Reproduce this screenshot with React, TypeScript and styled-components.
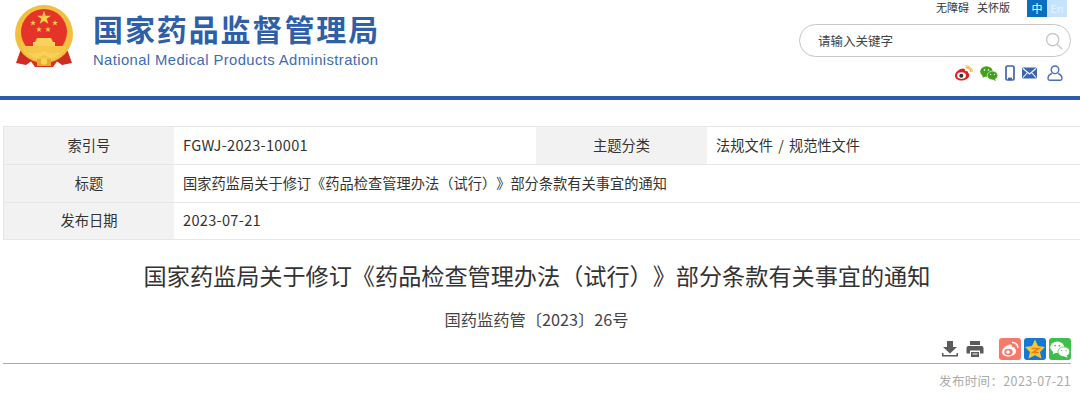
import React from "react";
import styled, { createGlobalStyle } from "styled-components";

const Global = createGlobalStyle`
  html, body { margin: 0; padding: 0; background: #fff; }
  body { font-family: "Liberation Sans", "Noto Sans CJK SC", sans-serif; color: #333; width: 1080px; height: 413px; overflow: hidden; text-spacing-trim: space-all; }
`;
const Page = styled.div`
  width: 1080px; height: 413px; overflow: hidden; display: flex; flex-direction: column;
`;
const Header = styled.header`
  height: 96px; display: flex; justify-content: space-between; flex-shrink: 0;
`;
const Brand = styled.div`
  display: flex; padding: 5px 0 0 14px; gap: 19px; align-items: flex-start;
`;
const BrandText = styled.div`
  display: flex; flex-direction: column; padding-top: 6px; width: 290px;
`;
const BrandCn = styled.div`
  font: 700 30px/34px "Noto Sans CJK SC", sans-serif; color: #2e5fa8; letter-spacing: 1.9px; white-space: nowrap;
`;
const BrandEn = styled.div`
  font: 400 14.8px/16px "Liberation Sans", sans-serif; color: #3f6bb0; letter-spacing: 0.41px; margin-top: 7px; white-space: nowrap;
`;
const Tools = styled.div`
  width: 281px; display: flex; flex-direction: column; align-items: flex-end;
`;
const TopLinks = styled.div`
  display: flex; align-items: flex-start; height: 17px; margin-right: 13px;
`;
const TopLink = styled.span`
  font: 400 11px/14px "Noto Sans CJK SC", sans-serif; color: #333; margin-right: 8px; white-space: nowrap;
`;
const Langs = styled.div`
  display: flex; margin-left: 9px;
`;
const Lang = styled.span<{ $on?: boolean }>`
  flex: 0 0 20px; height: 17px; display: flex; align-items: center; justify-content: center;
  font: 400 11px/1 "Noto Sans CJK SC", sans-serif;
  color: ${p => (p.$on ? "#fff" : "#e8f3ff")}; background: ${p => (p.$on ? "#0b6fc0" : "#c5e3fb")};
`;
const Search = styled.div`
  box-sizing: border-box; width: 272px; height: 33px; margin: 7px 9px 0 0; border: 1px solid #c6c6c6; border-radius: 17px;
  display: flex; align-items: center; justify-content: space-between; padding: 0 7px 0 18px;
`;
const SearchText = styled.span`
  font: 400 12.5px/1 "Noto Sans CJK SC", sans-serif; color: #444; position: relative; top: 1px;
`;
const Socials = styled.div`
  display: flex; align-items: center; gap: 7px; margin: 6px 17px 0 0; height: 20px;
`;
const UserSlot = styled.span`
  display: flex; margin-left: 3px;
`;
const Rule = styled.div`
  height: 4px; background: #2e5ca8; flex-shrink: 0;
`;
const Table = styled.div`
  margin: 26px 0 0 3px; width: 1077px; box-sizing: border-box; border: 1px solid #e6e6e6; border-right: 0;
  display: grid; grid-template-columns: 170px 362px 171px 1fr; grid-template-rows: 37px 37px 36px; row-gap: 1px; background: #e6e6e6;
  flex-shrink: 0;
`;
const Label = styled.div`
  background: #f2f2f2; display: flex; align-items: center; justify-content: center; padding-bottom: 1px; box-sizing: border-box;
  font: 400 14.25px/1 "Noto Sans CJK SC", sans-serif; color: #333;
`;
const Value = styled.div<{ $span?: number }>`
  background: #fff; display: flex; align-items: center; padding: 0 0 1px 9px; box-sizing: border-box;
  font: 400 14.24px/1 "Noto Sans CJK SC", sans-serif; color: #333; white-space: pre;
  grid-column: span ${p => p.$span ?? 1};
`;
const Latin = styled.span`
  font-size: 14.6px; letter-spacing: 0.3px;
`;
const Slash = styled.span`
  margin: 0 2px;
`;
const Title = styled.h1`
  margin: 19px 0 0; padding-right: 6px; font: 400 23.15px/32px "Noto Sans CJK SC", sans-serif; color: #333; text-align: center; white-space: nowrap;
`;
const DocNo = styled.div`
  margin-top: 18px; padding-right: 7px; font: 400 16.25px/20px "Noto Sans CJK SC", sans-serif; color: #444; text-align: center;
`;
const ShareBar = styled.div`
  margin: 8px 9px 0 3px; height: 27px; padding-top: 1px; box-sizing: border-box; border-bottom: 1px solid #aaa; display: flex; justify-content: flex-end; align-items: flex-start; gap: 3px;
`;
const Share = styled.span<{ $bg?: string }>`
  width: 22px; height: 22px; border-radius: 3px; background: ${p => p.$bg ?? "transparent"}; display: flex; align-items: center; justify-content: center;
`;
const Gap = styled.span`
  width: 7px;
`;
const Published = styled.div`
  margin: 9px 9px 0 0; text-align: right; font: 400 12.5px/16px "Noto Sans CJK SC", sans-serif; color: #aaa; letter-spacing: 0.35px;
`;

const star = "M0 -5 L1.18 -1.55 L4.76 -1.55 L1.9 .6 L2.94 4.05 L0 2 L-2.94 4.05 L-1.9 .6 L-4.76 -1.55 L-1.18 -1.55 Z";
const Emblem = () => (
  <svg width="60" height="62" viewBox="0 0 60 62">
    <path d="M7 44 L2 58 L12 60 L19 55 L41 55 L48 60 L58 58 L53 44 Z" fill="#cf2b1f" />
    <path d="M13 51 L21 62 H39 L47 51 Z" fill="#d9301f" />
    <circle cx="30" cy="29" r="29" fill="#f2bf3e" />
    <circle cx="30" cy="27" r="23" fill="#e5332a" />
    <path d="M11 40 A23 23 0 0 0 49 40 L47 43 H13 Z" fill="#e5332a" />
    <path d="M6 34 C10 46 18 52 30 52 C42 52 50 46 54 34 C52 50 42 56 30 56 C18 56 8 50 6 34 Z" fill="#f5c84c" />
    <path transform="translate(30 13) scale(1.45)" d={star} fill="#f6d04c" />
    <path transform="translate(19 18) scale(.62)" d={star} fill="#f6d04c" />
    <path transform="translate(41 18) scale(.62)" d={star} fill="#f6d04c" />
    <path transform="translate(25 24.5) scale(.6)" d={star} fill="#f6d04c" />
    <path transform="translate(34 24.5) scale(.6)" d={star} fill="#f6d04c" />
    <path d="M21 37 L23 33 H37 L39 37 H41 V42 H19 V37 Z" fill="#f8d35a" />
    <path d="M10 41 H50 C46 48 38 50 30 50 C22 50 14 48 10 41 Z" fill="#f5c84c" />
    <path d="M14 46 C18 50 24 49 30 46 C36 49 42 50 46 46 C44 52 38 54 34 52 L30 50 L26 52 C22 54 16 52 14 46 Z" fill="#f8d35a" />
    <path d="M23 54 H37 V61 H23 Z" fill="#e8a92f" />
    <circle cx="30" cy="56.5" r="3.2" fill="#f8d35a" />
  </svg>
);
const Magnifier = () => (
  <svg width="18" height="18" viewBox="0 0 20 20" fill="none" stroke="#c9c9c9" strokeWidth="1.6">
    <circle cx="8.5" cy="8.5" r="6.8" />
    <path d="M13.5 13.5 L18.5 18.5" strokeLinecap="round" />
  </svg>
);
const WeiboColor = () => (
  <svg width="19" height="16" viewBox="0 0 19 16">
    <path d="M1 10.5 C1 7 6 3.5 9 3.5 C11 3.5 11.5 5 11 6.2 C13 5.6 14.3 6.4 14 8 C15 8.3 15.3 9.2 15.3 10 C15.3 13 11.5 15.5 7.5 15.5 C4 15.5 1 13.7 1 10.5 Z" fill="#e0201f" />
    <ellipse cx="7.5" cy="10.6" rx="4.4" ry="3.3" fill="#fff" />
    <circle cx="7.3" cy="10.8" r="2" fill="#333" />
    <path d="M11.5 2.5 A5 5 0 0 1 17 7" fill="none" stroke="#efb53c" strokeWidth="1.6" />
    <path d="M11.5 .7 A7 7 0 0 1 18.6 6.5" fill="none" stroke="#efb53c" strokeWidth="1" />
  </svg>
);
const WechatColor = () => (
  <svg width="18" height="15" viewBox="0 0 18 15">
    <ellipse cx="6.5" cy="5.5" rx="6.3" ry="5.2" fill="#43a11f" />
    <path d="M3 9 L2.4 12 L6 10z" fill="#43a11f" />
    <ellipse cx="12.5" cy="9.5" rx="5.3" ry="4.4" fill="#43a11f" stroke="#fff" strokeWidth=".6" />
    <path d="M15 13 L16 15 L12.5 13.5z" fill="#43a11f" />
    <circle cx="4.5" cy="4" r=".8" fill="#fff" /><circle cx="8.5" cy="4" r=".8" fill="#fff" />
    <circle cx="10.5" cy="8.5" r=".6" fill="#fff" /><circle cx="14.5" cy="8.5" r=".6" fill="#fff" />
  </svg>
);
const Phone = () => (
  <svg width="10" height="16" viewBox="0 0 10 16">
    <rect x="1" y="1" width="8" height="14" rx="1.4" fill="none" stroke="#3a66b0" strokeWidth="1.7" />
    <rect x="3" y="12.6" width="4" height="2.4" fill="#3a66b0" />
  </svg>
);
const Mail = () => (
  <svg width="15" height="12" viewBox="0 0 15 12">
    <rect x="0" y="0.5" width="15" height="11" rx="1.5" fill="#3a66b0" />
    <path d="M1 1.5 L7.5 7 L14 1.5 M1 10.5 L5.5 5.5 M14 10.5 L9.5 5.5" fill="none" stroke="#fff" strokeWidth="1.1" />
  </svg>
);
const User = () => (
  <svg width="16" height="16" viewBox="0 0 16 16" fill="none" stroke="#4b71b6" strokeWidth="1.4">
    <circle cx="8" cy="4.8" r="3.8" />
    <path d="M4.8 8.5 C2.5 9.5 1 11 1 13.5 C1 14.6 1.6 15.2 2.6 15.2 H13.4 C14.4 15.2 15 14.6 15 13.5 C15 11 13.5 9.5 11.2 8.5" />
  </svg>
);
const Download = () => (
  <svg width="18" height="18" viewBox="0 0 18 18" fill="#5a5a5a">
    <path d="M6 1 H12 V7 H16 L9 13.5 L2 7 H6 Z" />
    <path d="M1 13 V16.5 H17 V13 H15.5 V15 H2.5 V13 Z" />
  </svg>
);
const Printer = () => (
  <svg width="18" height="18" viewBox="0 0 18 18" fill="#5a5a5a">
    <path d="M4 1 H14 V5 H4 Z" />
    <path d="M2.5 6 H15.5 A2 2 0 0 1 17.5 8 V13.5 H14 V10.5 H4 V13.5 H.5 V8 A2 2 0 0 1 2.5 6 Z" />
    <path d="M5 12 H13 V17 H5 Z M6.5 13.5 V14.5 H11.5 V13.5 Z" />
  </svg>
);
const WeiboShare = () => (
  <svg width="20" height="18" viewBox="0 0 20 18">
    <path d="M2 12 C2 8.5 7 4.5 10 4.5 C12 4.5 12.3 6 11.8 7.2 C14 6.5 15.2 7.4 14.8 9 C15.8 9.3 16.2 10.2 16.2 11 C16.2 14 12.5 16.5 8.5 16.5 C5 16.5 2 15 2 12 Z" fill="#fff" />
    <ellipse cx="8.5" cy="12" rx="4.2" ry="3.2" fill="#f7796b" />
    <circle cx="8" cy="12" r="1.8" fill="#fff" />
    <path d="M12 2.5 A5.5 5.5 0 0 1 18 8" fill="none" stroke="#fff" strokeWidth="1.5" />
  </svg>
);
const QZone = () => (
  <svg width="22" height="22" viewBox="0 0 22 22">
    <path d="M11 1.5 L14 8 L21 9 L16 14 L17.5 20.5 L11 17.3 L4.5 20.5 L6 14 L1 9 L8 8 Z" fill="#f8c92c" />
    <path d="M7.5 10.5 H14.5 L9 14.5 H15" fill="none" stroke="#e2811d" strokeWidth="1.6" />
  </svg>
);
const WechatShare = () => (
  <svg width="20" height="17" viewBox="0 0 18 15">
    <ellipse cx="6.5" cy="5.5" rx="6.3" ry="5.2" fill="#fff" />
    <path d="M3 9 L2.4 12 L6 10z" fill="#fff" />
    <ellipse cx="12.5" cy="9.5" rx="5.3" ry="4.4" fill="#fff" stroke="#3cc04a" strokeWidth=".6" />
    <path d="M15 13 L16 15 L12.5 13.5z" fill="#fff" />
    <circle cx="4.5" cy="4" r=".8" fill="#3cc04a" /><circle cx="8.5" cy="4" r=".8" fill="#3cc04a" />
    <circle cx="10.5" cy="8.5" r=".6" fill="#3cc04a" /><circle cx="14.5" cy="8.5" r=".6" fill="#3cc04a" />
  </svg>
);

export default function App() {
  return (
    <Page>
      <Global />
      <Header>
        <Brand>
          <Emblem />
          <BrandText>
            <BrandCn>国家药品监督管理局</BrandCn>
            <BrandEn>National Medical Products Administration</BrandEn>
          </BrandText>
        </Brand>
        <Tools>
          <TopLinks>
            <TopLink>无障碍</TopLink>
            <TopLink>关怀版</TopLink>
            <Langs>
              <Lang $on>中</Lang>
              <Lang>En</Lang>
            </Langs>
          </TopLinks>
          <Search>
            <SearchText>请输入关键字</SearchText>
            <Magnifier />
          </Search>
          <Socials>
            <WeiboColor />
            <WechatColor />
            <Phone />
            <Mail />
            <UserSlot><User /></UserSlot>
          </Socials>
        </Tools>
      </Header>
      <Rule />
      <Table>
        <Label>索引号</Label>
        <Value><Latin>FGWJ-2023-10001</Latin></Value>
        <Label>主题分类</Label>
        <Value>法规文件<Slash> / </Slash>规范性文件</Value>
        <Label>标题</Label>
        <Value $span={3}>国家药监局关于修订《药品检查管理办法（试行）》部分条款有关事宜的通知</Value>
        <Label>发布日期</Label>
        <Value $span={3}><Latin>2023-07-21</Latin></Value>
      </Table>
      <Title>国家药监局关于修订《药品检查管理办法（试行）》部分条款有关事宜的通知</Title>
      <DocNo>国药监药管〔2023〕26号</DocNo>
      <ShareBar>
        <Share><Download /></Share>
        <Share><Printer /></Share>
        <Gap />
        <Share $bg="#f7796b"><WeiboShare /></Share>
        <Share $bg="#1478d4"><QZone /></Share>
        <Share $bg="#3cc04a"><WechatShare /></Share>
      </ShareBar>
      <Published>发布时间：2023-07-21</Published>
    </Page>
  );
}
